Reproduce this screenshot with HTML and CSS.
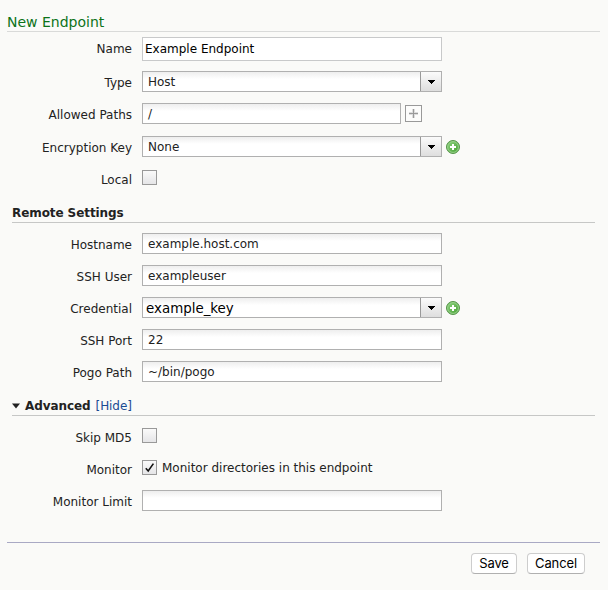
FILE: index.html
```html
<!DOCTYPE html>
<html lang="en">
<head>
<meta charset="utf-8">
<title>New Endpoint</title>
<link rel="stylesheet" href="styles.css">
</head>
<body>
<svg width="0" height="0" class="defs">
  <defs>
    <linearGradient id="green" x1="0" y1="0" x2="1" y2="1">
      <stop offset="0" stop-color="#8bd07c"/><stop offset="1" stop-color="#46a234"/>
    </linearGradient>
    <symbol id="add" viewBox="0 0 14 14">
      <circle cx="7" cy="7" r="6.5" fill="#66b056" stroke="#57974b"/>
      <circle cx="7" cy="7" r="5.4" fill="url(#green)" stroke="#a5d899" stroke-width=".8"/>
      <path d="M6 4h2v2h2v2H8v2H6V8H4V6h2z" fill="#fff"/>
    </symbol>
    <symbol id="arrow" viewBox="0 0 7 4">
      <path d="M0 0h7v1H6v1H5v1H4v1H3V3H2V2H1V1H0z" fill="#000"/>
    </symbol>
  </defs>
</svg>
<form class="form">
  <h1 class="title">New Endpoint</h1>
  <div class="row row-name"><label>Name</label><div class="plain">Example Endpoint</div></div>
  <div class="row"><label>Type</label><div class="field select"><span>Host</span><i><svg><use href="#arrow"/></svg></i></div></div>
  <div class="row row-paths"><label>Allowed Paths</label><div class="field short"><span>/</span></div><div class="plus"><svg viewBox="0 0 15 15"><path class="halo" d="M7.5 3v9M3 7.5h9"/><path d="M7.5 3v9M3 7.5h9"/></svg></div></div>
  <div class="row row-key"><label>Encryption Key</label><div class="field select"><span>None</span><i><svg><use href="#arrow"/></svg></i></div><svg class="add"><use href="#add"/></svg></div>
  <div class="row row-check"><label>Local</label><div class="check"></div></div>

  <h2 class="section remote"><span>Remote Settings</span></h2>
  <div class="row"><label>Hostname</label><div class="field"><span>example.host.com</span></div></div>
  <div class="row"><label>SSH User</label><div class="field"><span>exampleuser</span></div></div>
  <div class="row"><label>Credential</label><div class="field select large"><span>example_key</span><i><svg><use href="#arrow"/></svg></i></div><svg class="add"><use href="#add"/></svg></div>
  <div class="row"><label>SSH Port</label><div class="field"><span>22</span></div></div>
  <div class="row"><label>Pogo Path</label><div class="field"><span>~/bin/pogo</span></div></div>

  <h2 class="section advanced"><svg class="toggle" viewBox="0 0 8 6"><path d="M0 .5h8L4 5.5z"/></svg><span>Advanced</span> <a>[Hide]</a></h2>
  <div class="row row-check"><label>Skip MD5</label><div class="check"></div></div>
  <div class="row row-monitor row-check"><label>Monitor</label><div class="check"><svg viewBox="0 0 13 13"><path d="M2.8 7.2 5.2 10 10.4 2.6"/></svg></div><span class="caption">Monitor directories in this endpoint</span></div>
  <div class="row row-limit"><label>Monitor Limit</label><div class="field"></div></div>

  <div class="footer"><button type="button" class="save">Save</button><button type="button" class="cancel">Cancel</button></div>
</form>
</body>
</html>
```

FILE: styles.css
```css
* { box-sizing: border-box; }
body {
  margin: 0;
  height: 590px;
  overflow: hidden;
  background: #fafaf8;
  color: #222;
  font: 12px/16px "DejaVu Sans", Verdana, sans-serif;
}
.defs { display: block; height: 0; }
.form { padding: 0 8px 0 7px; }
.title {
  margin: 0 0 5px;
  height: 32px;
  padding-top: 13px;
  border-bottom: 1px solid #d9dad9;
  color: #0c7318;
  font-size: 14px;
  line-height: 18px;
  font-weight: 400;
}
.row { display: flex; align-items: flex-start; height: 32px; white-space: nowrap; }
.row label { width: 125px; margin-right: 10px; padding-top: 4px; text-align: right; }
.row-name { height: 34px; }
.row-paths { height: 33px; }
.row-key { height: 34px; }
.plain {
  width: 300px;
  height: 24px;
  padding: 3px 2px;
  border: 1px solid #c8c9ca;
  background: #fff;
  color: #000;
}
.field {
  display: flex;
  justify-content: space-between;
  width: 300px;
  height: 21px;
  padding: 2px 0 0 5px;
  border: 1px solid #b0b0b0;
  background: linear-gradient(#eee, #fff 7px);
}
.short { width: 259px; }
.field i {
  display: flex;
  align-items: center;
  justify-content: center;
  width: 21px;
  height: 19px;
  margin-top: -2px;
  border-left: 1px solid #999;
  background: linear-gradient(#fbfbfb, #dedede);
}
.field i svg { width: 7px; height: 4px; margin-left: 1px; }
.large { padding-left: 3px; color: #000; font-size: 13.4px; }
.large span { padding-top: 1px; }
.plus {
  width: 17px;
  height: 17px;
  margin: 2px 0 0 4px;
  border: 1px solid #999;
  background: #fcfcfb;
}
.plus svg { display: block; width: 15px; height: 15px; fill: none; stroke: #999; }
.plus .halo { stroke: #ddd; stroke-width: 3; }
.add { width: 14px; height: 14px; margin: 4px 0 0 4px; }
.check {
  width: 15px;
  height: 15px;
  border: 1px solid #999;
  background: linear-gradient(#fafafa, #e5e5e7);
}
.check svg { display: block; fill: none; stroke: #111; stroke-width: 1.6; }
.row-check label { padding-top: 2px; }
.caption { margin-left: 5px; }
.section {
  display: flex;
  height: 21px;
  margin: 0 5px 10px;
  border-bottom: 1px solid #c6c7c6;
  font-size: 12px;
  line-height: 16px;
}
.remote { padding-top: 3px; letter-spacing: -.08px; }
.advanced {
  align-items: flex-start;
  height: 19px;
  margin: 4px 5px 12px;
  padding-top: 1px;
  letter-spacing: -.08px;
}
.section.advanced a { margin-left: 5px; color: #1a4b93; font-weight: 400; }
.toggle { width: 8px; height: 6px; margin: 5px 5px 0 0; fill: #222; }
.row-monitor { height: 30px; }
.row-limit { height: 52px; }
.footer {
  display: flex;
  justify-content: flex-end;
  gap: 10px;
  padding: 10px 15px 0 0;
  border-top: 1px solid #a9a9c4;
}
button {
  height: 21px;
  padding: 0 0 1px;
  border: 1px solid #cdcdcd;
  border-bottom-color: #b0b0b0;
  border-radius: 4px;
  background: #fff;
  color: #000;
  font: 13px/18px Inter, sans-serif;
  letter-spacing: -.1px;
}
.save { width: 46px; }
.cancel { width: 58px; }
```
